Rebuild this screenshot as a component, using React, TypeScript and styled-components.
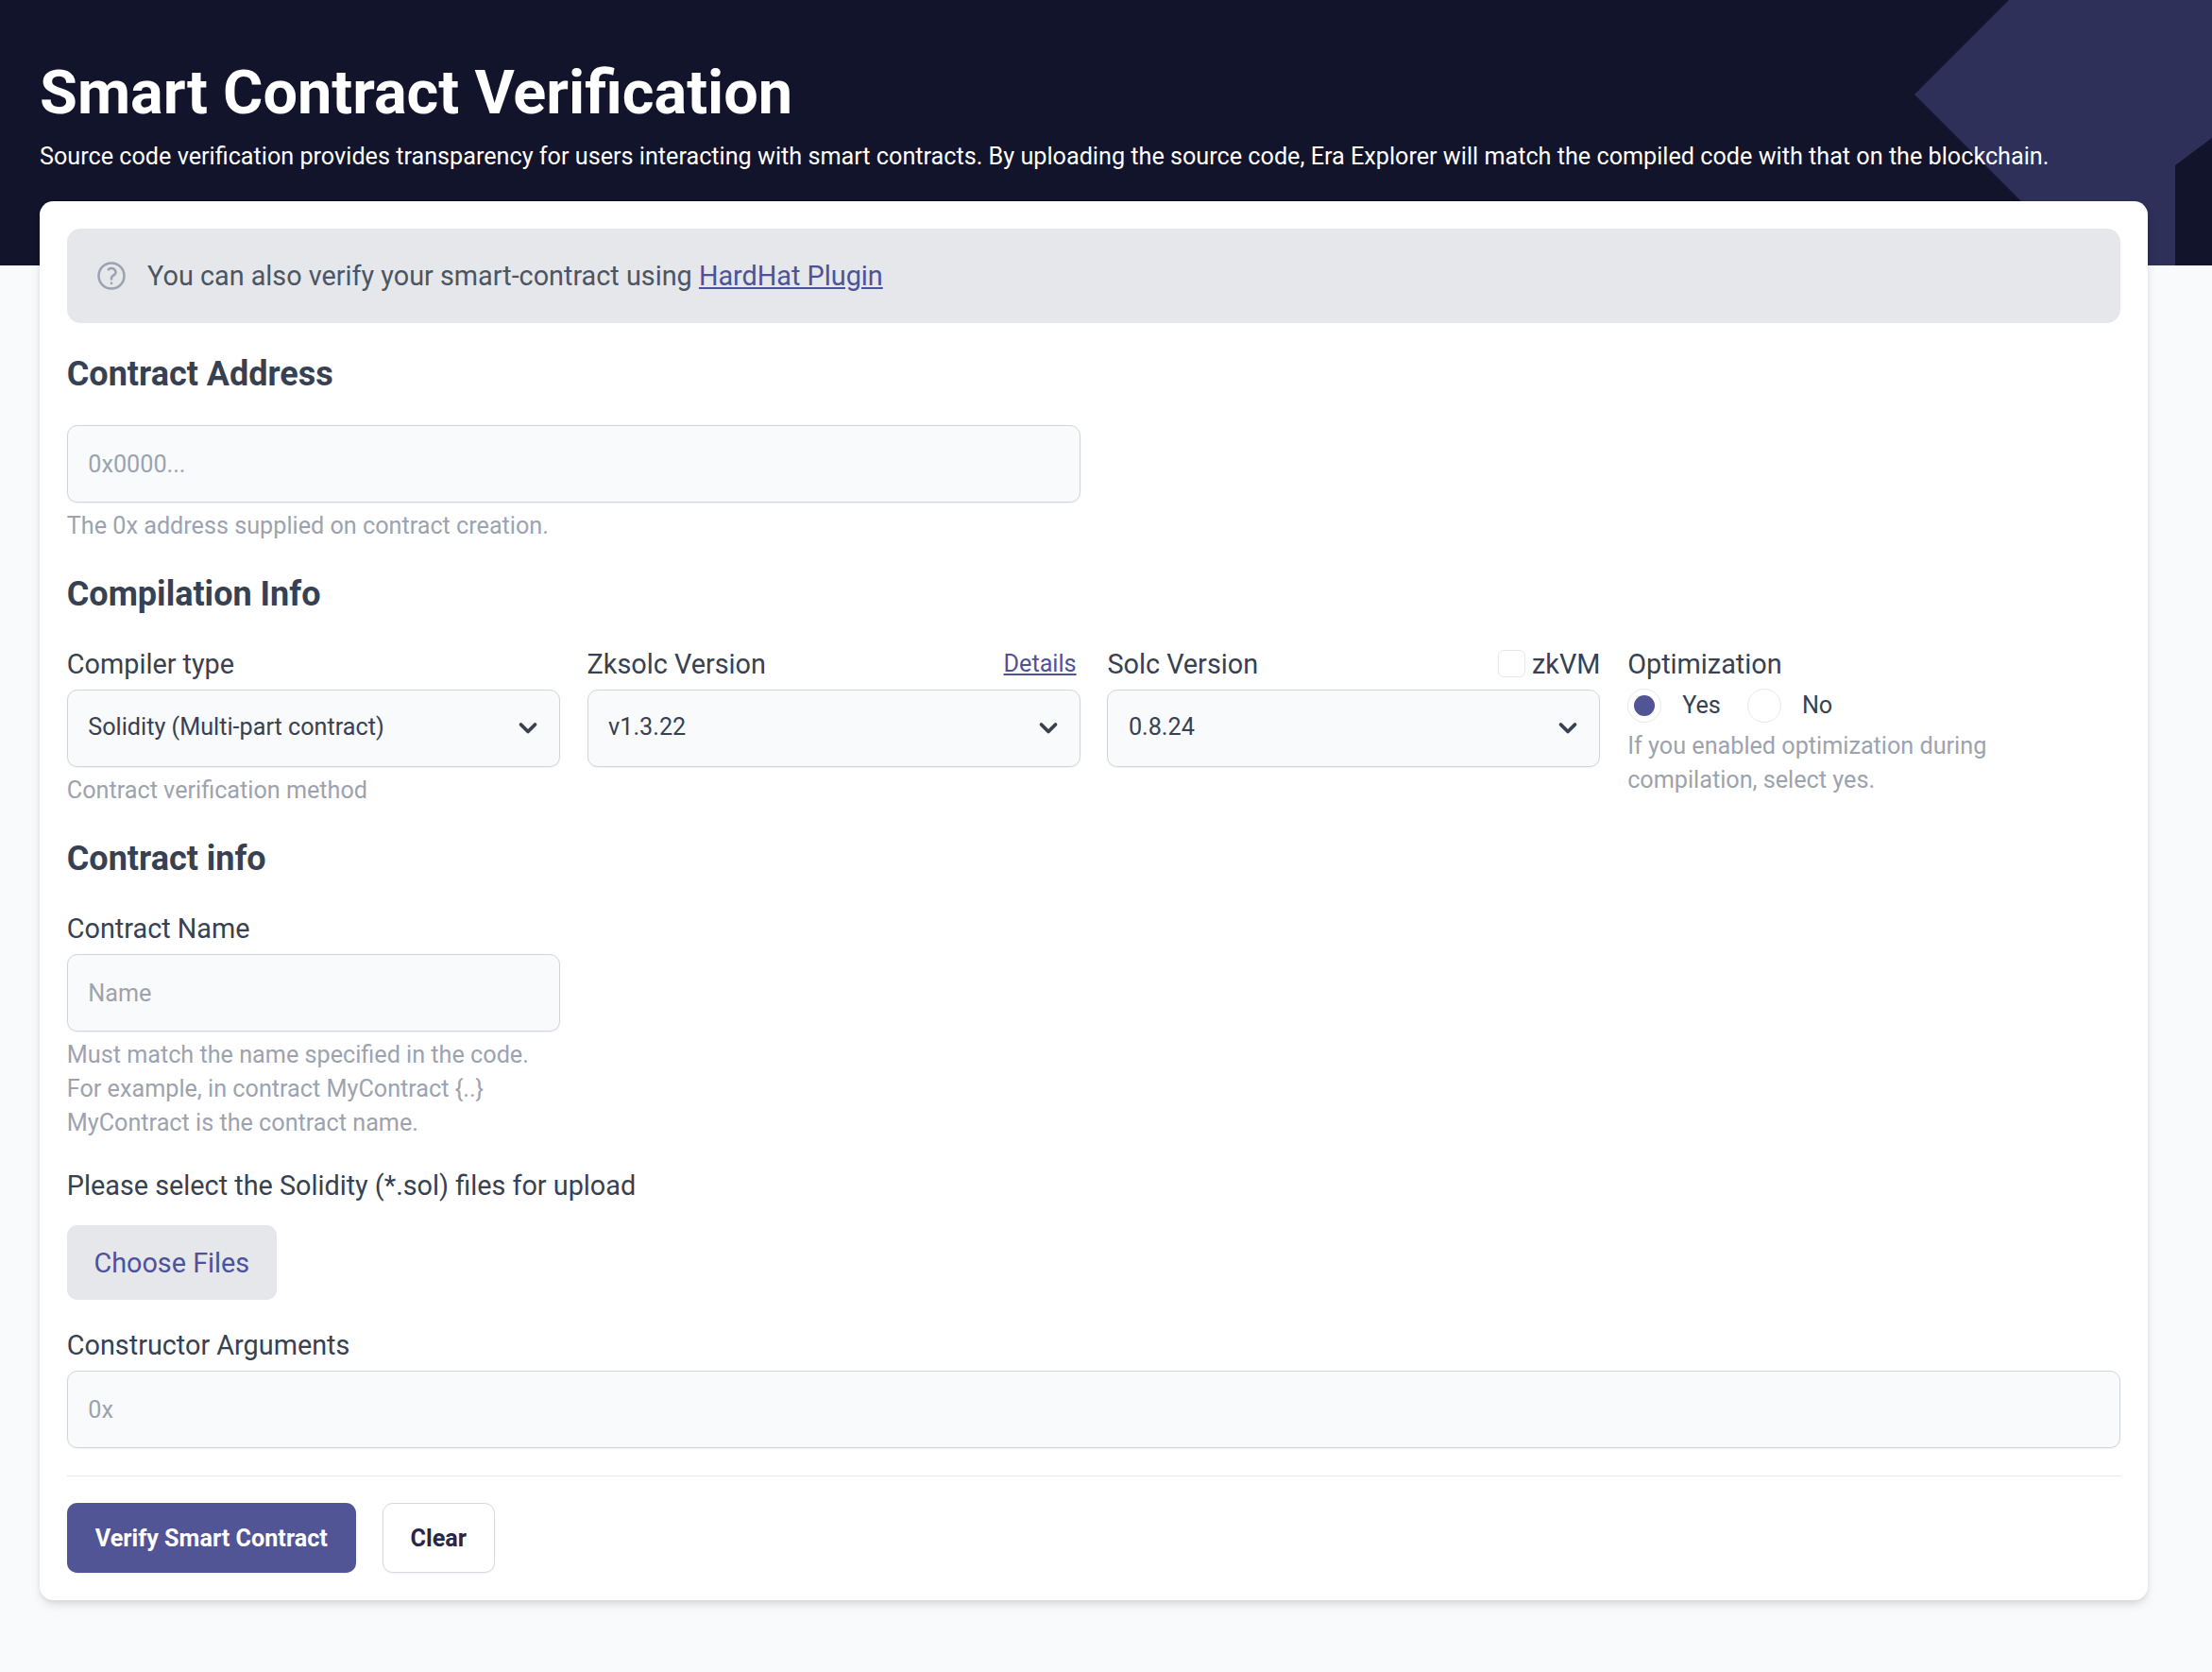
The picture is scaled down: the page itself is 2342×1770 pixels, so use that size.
import React from 'react';
import styled, { createGlobalStyle } from 'styled-components';

const GlobalStyle = createGlobalStyle`
  * { box-sizing: border-box; }
  body {
    margin: 0;
    background: #f9fafb;
    font-family: Roboto, "Liberation Sans", sans-serif;
    color: #374151;
  }
`;

const Chevron = () => (
  <ChevronIcon viewBox="0 0 20 20" fill="none" stroke="currentColor" strokeWidth="2.5">
    <path strokeLinecap="round" strokeLinejoin="round" d="M5 8l5 5 5-5" />
  </ChevronIcon>
);

const SelectField = ({ value }: { value: string }) => (
  <SelectBox>
    <span>{value}</span>
    <Chevron />
  </SelectBox>
);

export default function App() {
  return (
    <>
      <GlobalStyle />
      <Hero>
        <HeroShape viewBox="0 0 315 281" aria-hidden="true">
          <polygon points="100,0 315,0 315,146 276,175 276,281 181,281 0,100" fill="#2f3059" />
        </HeroShape>
        <Title>Smart Contract Verification</Title>
        <Subtitle>
          Source code verification provides transparency for users interacting with smart contracts. By uploading the
          source code, Era Explorer will match the compiled code with that on the blockchain.
        </Subtitle>
      </Hero>

      <Card>
        <Notice>
          <NoticeIcon viewBox="0 0 24 24" fill="none" stroke="currentColor" strokeWidth="1.7">
            <path
              strokeLinecap="round"
              strokeLinejoin="round"
              d="M9.879 7.519c1.171-1.025 3.071-1.025 4.242 0 1.172 1.025 1.172 2.687 0 3.712-.203.179-.43.326-.67.442-.745.361-1.45.999-1.45 1.827v.75M21 12a9 9 0 1 1-18 0 9 9 0 0 1 18 0zm-9 5.25h.008v.008H12v-.008z"
            />
          </NoticeIcon>
          <span>
            You can also verify your smart-contract using <TextLink href="#">HardHat Plugin</TextLink>
          </span>
        </Notice>

        <SectionTitle>Contract Address</SectionTitle>
        <Grid>
          <Wide>
            <Input placeholder="0x0000..." />
            <Help>The 0x address supplied on contract creation.</Help>
          </Wide>
        </Grid>

        <SectionTitle>Compilation Info</SectionTitle>
        <Grid>
          <div>
            <LabelRow>
              <Label>Compiler type</Label>
            </LabelRow>
            <SelectField value="Solidity (Multi-part contract)" />
            <Help>Contract verification method</Help>
          </div>
          <div>
            <LabelRow>
              <Label>Zksolc Version</Label>
              <DetailsLink href="#">Details</DetailsLink>
            </LabelRow>
            <SelectField value="v1.3.22" />
          </div>
          <div>
            <LabelRow>
              <Label>Solc Version</Label>
              <CheckWrap>
                <CheckBox />
                zkVM
              </CheckWrap>
            </LabelRow>
            <SelectField value="0.8.24" />
          </div>
          <div>
            <LabelRow>
              <Label>Optimization</Label>
            </LabelRow>
            <RadioRow>
              <Radio $checked />
              <RadioText>Yes</RadioText>
              <Radio />
              <RadioText>No</RadioText>
            </RadioRow>
            <OptimizationHelp>If you enabled optimization during compilation, select yes.</OptimizationHelp>
          </div>
        </Grid>

        <SectionTitle>Contract info</SectionTitle>
        <Grid>
          <div>
            <LabelRow>
              <Label>Contract Name</Label>
            </LabelRow>
            <Input placeholder="Name" />
            <Help>
              Must match the name specified in the code.
              <br />
              For example, in contract MyContract {'{..}'}
              <br />
              MyContract is the contract name.
            </Help>
          </div>
        </Grid>

        <UploadLabel>Please select the Solidity (*.sol) files for upload</UploadLabel>
        <ChooseFiles type="button">Choose Files</ChooseFiles>

        <ArgsLabel>Constructor Arguments</ArgsLabel>
        <Input placeholder="0x" />

        <Divider />
        <Actions>
          <PrimaryButton type="button">Verify Smart Contract</PrimaryButton>
          <SecondaryButton type="button">Clear</SecondaryButton>
        </Actions>
      </Card>
    </>
  );
}

const Hero = styled.header`
  position: relative;
  height: 281px;
  padding: 58px 42px 0;
  background: #11142b;
  overflow: hidden;
`;
const HeroShape = styled.svg`
  position: absolute;
  top: 0;
  right: 0;
  width: 315px;
  height: 281px;
`;
const Title = styled.h1`
  position: relative;
  margin: 0;
  font-size: 64.8px;
  line-height: 80px;
  font-weight: 700;
  color: #fff;
`;
const Subtitle = styled.p`
  position: relative;
  margin: 9.5px 0 0;
  font-size: 25.2px;
  line-height: 36px;
  color: #fff;
  white-space: nowrap;
`;
const Card = styled.main`
  position: relative;
  width: 2232px;
  margin: -68px 0 76px 42px;
  padding: 29px 28.8px;
  background: #fff;
  border-radius: 14.4px;
  box-shadow: 0 6px 12px -2px rgba(0, 0, 0, 0.12), 0 2px 6px -1px rgba(0, 0, 0, 0.08);
`;
const Notice = styled.div`
  display: flex;
  align-items: center;
  gap: 20.5px;
  height: 100px;
  padding: 0 28.8px;
  background: #e5e7eb;
  border-radius: 14.4px;
  font-size: 28.8px;
  color: #4b5563;
`;
const NoticeIcon = styled.svg`
  width: 36px;
  height: 36px;
  color: #9ca3af;
  flex-shrink: 0;
`;
const TextLink = styled.a`
  color: #4e529a;
  text-decoration: underline;
`;
const SectionTitle = styled.h2`
  margin: 30px 0 30px;
  font-size: 36px;
  line-height: 48px;
  font-weight: 700;
  color: #374151;
`;
const Grid = styled.div`
  display: grid;
  grid-template-columns: repeat(4, 1fr);
  column-gap: 28.8px;
`;
const Wide = styled.div`
  grid-column: span 2;
`;
const LabelRow = styled.div`
  display: flex;
  align-items: center;
  justify-content: space-between;
  height: 36px;
  margin: 1.5px 0 9.5px;
`;
const Label = styled.label`
  font-size: 28.8px;
  color: #374151;
`;
const DetailsLink = styled.a`
  margin-right: 4px;
  font-size: 25.2px;
  color: #4e529a;
  text-decoration: underline;
`;
const CheckWrap = styled.label`
  display: flex;
  align-items: center;
  gap: 7px;
  font-size: 28.8px;
  color: #374151;
`;
const CheckBox = styled.span`
  width: 29px;
  height: 29px;
  border: 1px solid #e5e7eb;
  border-radius: 6px;
  background: #fff;
`;
const Input = styled.input`
  display: block;
  width: 100%;
  height: 82px;
  padding: 0 21.5px;
  background: #f9fafb;
  border: 1.5px solid #d1d5db;
  border-radius: 10.8px;
  box-shadow: 0 1px 2px rgba(0, 0, 0, 0.05);
  font-family: inherit;
  font-size: 25.2px;
  color: #374151;
  &::placeholder {
    color: #9ca3af;
    opacity: 1;
  }
`;
const SelectBox = styled.div`
  display: flex;
  align-items: center;
  justify-content: space-between;
  height: 82px;
  padding: 0 18px 3px 21.5px;
  background: #f9fafb;
  border: 1.5px solid #d1d5db;
  border-radius: 10.8px;
  box-shadow: 0 1px 2px rgba(0, 0, 0, 0.05);
  font-size: 25.2px;
  color: #374151;
`;
const ChevronIcon = styled.svg`
  width: 30px;
  height: 30px;
  color: #374151;
`;
const Help = styled.p`
  margin: 7px 0 0;
  font-size: 25.2px;
  line-height: 36px;
  color: #9ca3af;
`;
const OptimizationHelp = styled(Help)`
  margin-top: 0;
`;
const RadioRow = styled.div`
  display: flex;
  align-items: center;
  height: 36px;
  margin: -1.5px 0 7.5px;
`;
const Radio = styled.span<{ $checked?: boolean }>`
  position: relative;
  width: 36px;
  height: 36px;
  border: 1px solid #e5e7eb;
  border-radius: 50%;
  background: #fff;
  &::after {
    content: '';
    display: ${(p) => (p.$checked ? 'block' : 'none')};
    position: absolute;
    inset: 6px;
    border-radius: 50%;
    background: #515495;
  }
`;
const RadioText = styled.span`
  margin: 0 28px 0 22px;
  font-size: 25.2px;
  color: #374151;
`;
const UploadLabel = styled.div`
  margin-top: 30px;
  font-size: 28.8px;
  line-height: 36px;
  color: #374151;
`;
const ChooseFiles = styled.button`
  display: block;
  width: 222px;
  height: 79px;
  margin-top: 24px;
  border: 0;
  border-radius: 10.8px;
  background: #e5e7eb;
  font-family: inherit;
  font-size: 28.8px;
  color: #4e529a;
`;
const ArgsLabel = styled.div`
  margin: 30px 0 9px;
  font-size: 28.8px;
  line-height: 36px;
  color: #374151;
`;
const Divider = styled.hr`
  height: 1.5px;
  margin: 28.5px 0 28px;
  border: 0;
  background: #e5e7eb;
`;
const Actions = styled.div`
  display: flex;
  gap: 28px;
`;
const PrimaryButton = styled.button`
  width: 306px;
  height: 74px;
  border: 0;
  border-radius: 10.8px;
  background: #515495;
  box-shadow: 0 1px 2px rgba(0, 0, 0, 0.05);
  font-family: inherit;
  font-size: 25.2px;
  font-weight: 700;
  color: #fff;
`;
const SecondaryButton = styled.button`
  width: 119px;
  height: 74px;
  border: 1.5px solid #d8d8e0;
  border-radius: 10.8px;
  background: #fff;
  box-shadow: 0 1px 2px rgba(0, 0, 0, 0.05);
  font-family: inherit;
  font-size: 25.2px;
  font-weight: 700;
  color: #27274b;
`;
